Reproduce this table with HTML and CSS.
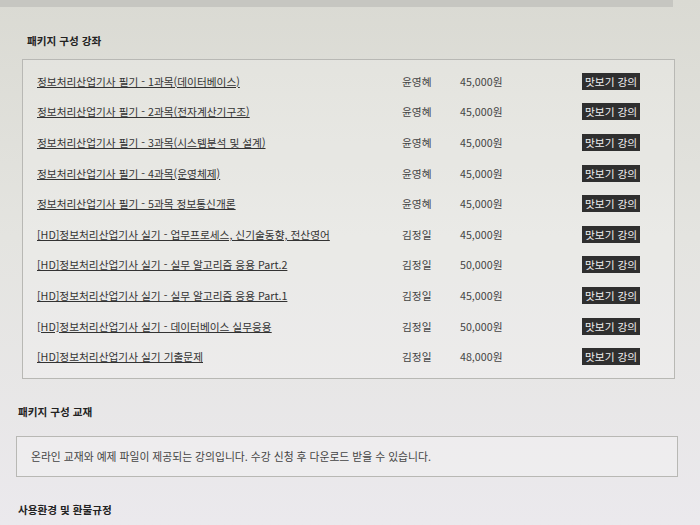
FILE: index.html
```html
<!DOCTYPE html>
<html lang="ko">
<head>
    <meta charset="UTF-8">
    <meta name="viewport" content="width=device-width, initial-scale=1.0">
    <title>패키지 구성</title>
    <link rel="stylesheet" href="styles.css">
</head>
<body>
    <div class="top-bar"></div>
    <div class="content">
        <!-- Liste des cours du paquet -->
        <div class="section section-courses">
            <h2 class="section-title">패키지 구성 강좌</h2>
            <div class="box course-list">
                <div class="course-row">
                    <a href="#" class="course-title">정보처리산업기사 필기 - 1과목(데이터베이스)</a>
                    <span class="course-teacher">윤영혜</span>
                    <span class="course-price">45,000원</span>
                    <span class="btn-preview">맛보기 강의</span>
                </div>
                <div class="course-row">
                    <a href="#" class="course-title">정보처리산업기사 필기 - 2과목(전자계산기구조)</a>
                    <span class="course-teacher">윤영혜</span>
                    <span class="course-price">45,000원</span>
                    <span class="btn-preview">맛보기 강의</span>
                </div>
                <div class="course-row">
                    <a href="#" class="course-title">정보처리산업기사 필기 - 3과목(시스템분석 및 설계)</a>
                    <span class="course-teacher">윤영혜</span>
                    <span class="course-price">45,000원</span>
                    <span class="btn-preview">맛보기 강의</span>
                </div>
                <div class="course-row">
                    <a href="#" class="course-title">정보처리산업기사 필기 - 4과목(운영체제)</a>
                    <span class="course-teacher">윤영혜</span>
                    <span class="course-price">45,000원</span>
                    <span class="btn-preview">맛보기 강의</span>
                </div>
                <div class="course-row">
                    <a href="#" class="course-title">정보처리산업기사 필기 - 5과목 정보통신개론</a>
                    <span class="course-teacher">윤영혜</span>
                    <span class="course-price">45,000원</span>
                    <span class="btn-preview">맛보기 강의</span>
                </div>
                <div class="course-row">
                    <a href="#" class="course-title">[HD]정보처리산업기사 실기 - 업무프로세스, 신기술동향, 전산영어</a>
                    <span class="course-teacher">김정일</span>
                    <span class="course-price">45,000원</span>
                    <span class="btn-preview">맛보기 강의</span>
                </div>
                <div class="course-row">
                    <a href="#" class="course-title">[HD]정보처리산업기사 실기 - 실무 알고리즘 응용 Part.2</a>
                    <span class="course-teacher">김정일</span>
                    <span class="course-price">50,000원</span>
                    <span class="btn-preview">맛보기 강의</span>
                </div>
                <div class="course-row">
                    <a href="#" class="course-title">[HD]정보처리산업기사 실기 - 실무 알고리즘 응용 Part.1</a>
                    <span class="course-teacher">김정일</span>
                    <span class="course-price">45,000원</span>
                    <span class="btn-preview">맛보기 강의</span>
                </div>
                <div class="course-row">
                    <a href="#" class="course-title">[HD]정보처리산업기사 실기 - 데이터베이스 실무응용</a>
                    <span class="course-teacher">김정일</span>
                    <span class="course-price">50,000원</span>
                    <span class="btn-preview">맛보기 강의</span>
                </div>
                <div class="course-row">
                    <a href="#" class="course-title">[HD]정보처리산업기사 실기 기출문제</a>
                    <span class="course-teacher">김정일</span>
                    <span class="course-price">48,000원</span>
                    <span class="btn-preview">맛보기 강의</span>
                </div>
            </div>
        </div>

        <!-- Manuels -->
        <div class="section section-books">
            <h2 class="section-title">패키지 구성 교재</h2>
            <div class="box notice">
                온라인 교재와 예제 파일이 제공되는 강의입니다. 수강 신청 후 다운로드 받을 수 있습니다.
            </div>
        </div>

        <div class="section section-policy">
            <h2 class="section-title">사용환경 및 환불규정</h2>
        </div>
    </div>
</body>
</html>
```

FILE: styles.css
```css
/* Fond gris clair comme sur l'écran */
body {
    margin: 0;
    font-family: "Noto Sans CJK KR", "Noto Sans", sans-serif;
    color: #333;
    background: linear-gradient(180deg, #dadad3 0%, #e4e4e0 45%, #ebe9ed 100%);
    min-height: 525px;
}

/* Bande grise en haut */
.top-bar {
    width: 673px;
    height: 7px;
    background-color: #c6c6c1;
}

.content {
    padding: 0 22px 0 16px;
}

.section-title {
    font-size: 10.6px;
    font-weight: bold;
    line-height: 16px;
    color: #222;
    margin: 0;
    padding-left: 2px;
}

.box {
    border: 1px solid #b8b8b4;
    background: rgba(255, 255, 255, 0.22);
}

/* Section des cours */
.section-courses {
    margin: 0 3px 0 6px;
}

.section-courses .section-title {
    margin-top: 26px;
    margin-bottom: 10px;
    padding-left: 5px;
}

.course-list {
    padding: 6px 14px;
}

.course-row {
    display: grid;
    grid-template-columns: 365px 58px 122px auto;
    align-items: center;
    height: 30.6px;
    font-size: 10.7px;
}

.course-title {
    color: #333;
    text-decoration: underline;
    white-space: nowrap;
}

.course-teacher,
.course-price {
    color: #444;
}

.btn-preview {
    justify-self: start;
    background-color: #2f2f2f;
    color: #f0f0f0;
    padding: 0 3px;
    line-height: 17px;
}

/* Section des manuels */
.section-books .section-title {
    margin-top: 25px;
    margin-bottom: 16px;
}

.notice {
    height: 39px;
    line-height: 39px;
    padding: 0 14px;
    font-size: 10.8px;
    color: #444;
}

.section-policy .section-title {
    margin-top: 25px;
}
```
